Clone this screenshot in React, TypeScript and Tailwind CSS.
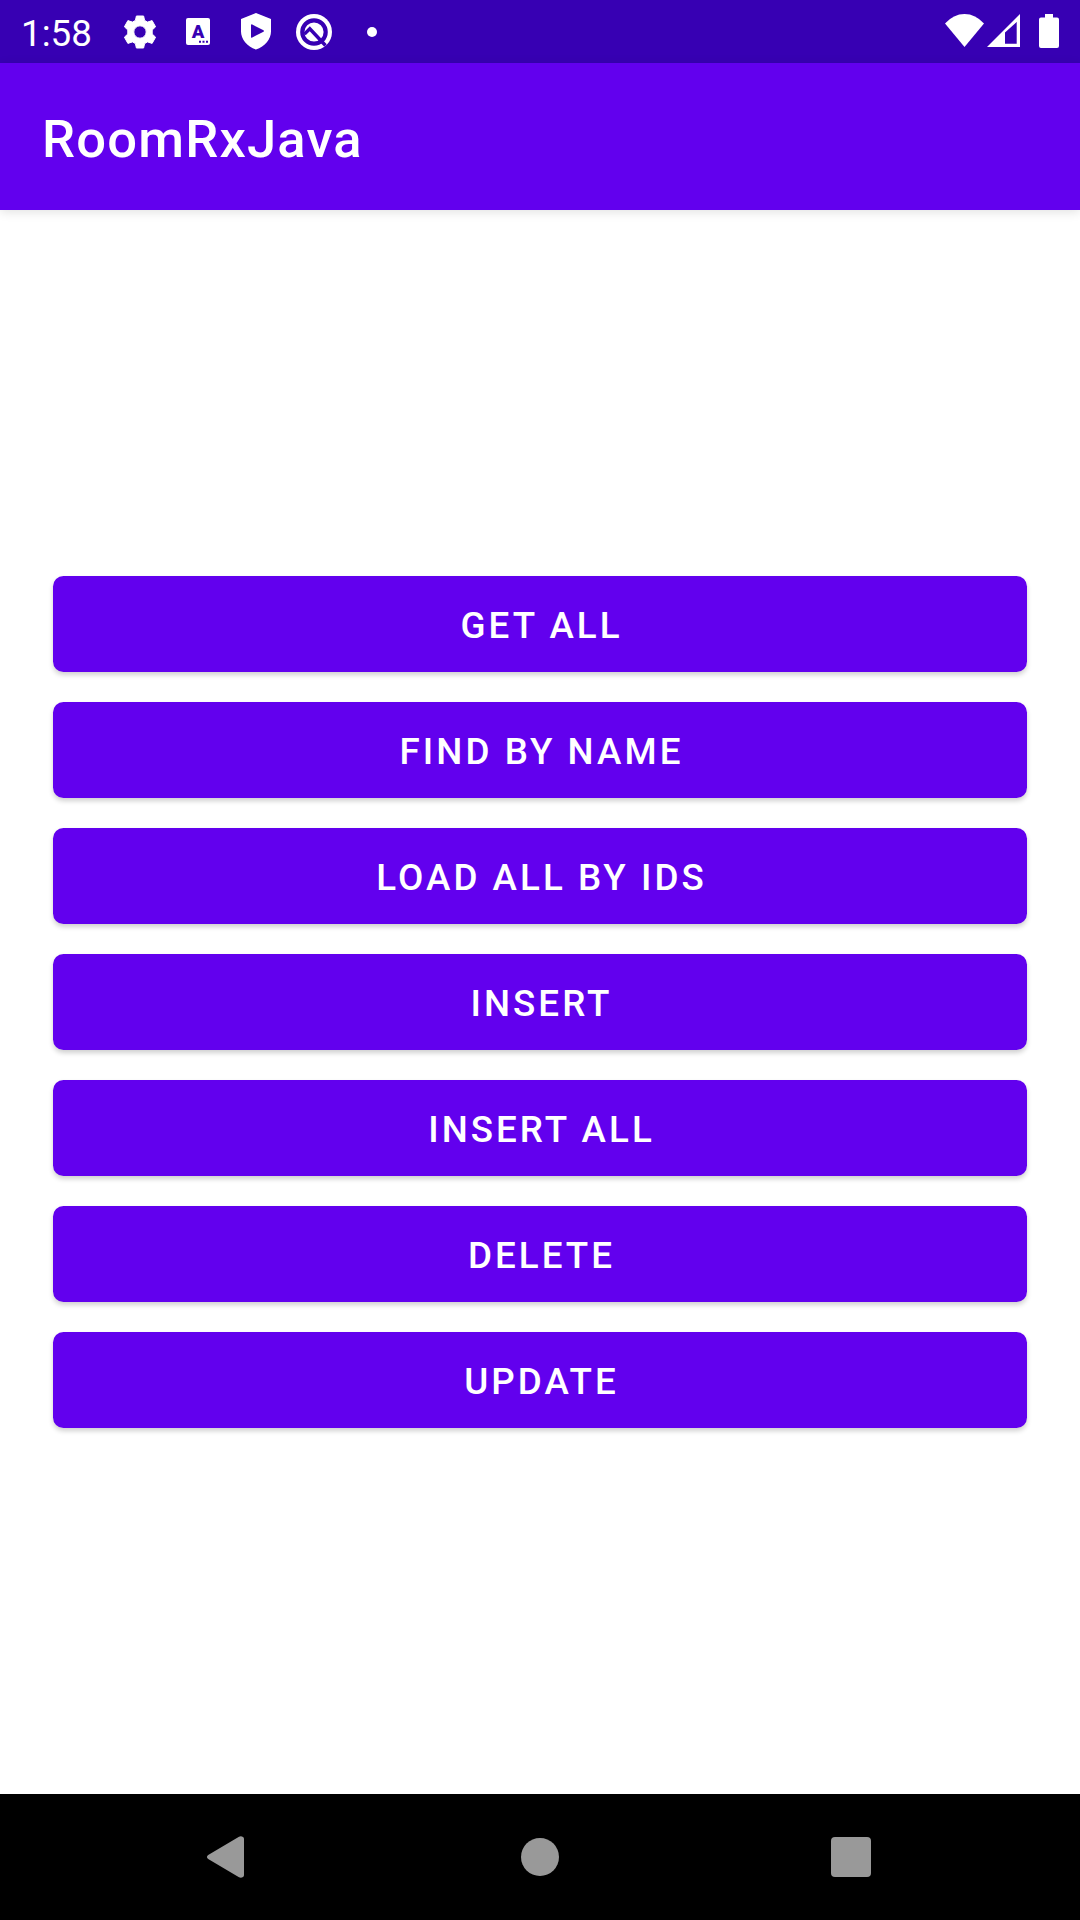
import React from "react";

const actions = [
  "GET ALL",
  "FIND BY NAME",
  "LOAD ALL BY IDS",
  "INSERT",
  "INSERT ALL",
  "DELETE",
  "UPDATE",
];

function GearIcon() {
  return (
    <svg width="34" height="34" viewBox="-17 -17 34 34">
      <path
        fill="#fff"
        stroke="#fff"
        strokeWidth="1"
        strokeLinejoin="round"
        fillRule="evenodd"
        d="M-3.600-16H3.600L4.600-11.600 7.500-9.900 12.100-11.400 15.600-5.200 12.200-2V2L15.600 5.200 12.100 11.400 7.500 9.900 4.600 11.600 3.600 16H-3.600L-4.600 11.600-7.500 9.900-12.100 11.400-15.600 5.200-12.200 2V-2L-15.600-5.200-12.100-11.400-7.500-9.900-4.600-11.600ZM6.200 0A6.200 6.200 0 1 0-6.200 0 6.200 6.200 0 1 0 6.200 0Z"
      />
    </svg>
  );
}

function LetterIcon() {
  return (
    <svg width="24" height="27" viewBox="0 0 24 27">
      <rect width="24" height="27" rx="2" fill="#fff" />
      <text
        x="12"
        y="19.5"
        textAnchor="middle"
        fontFamily="Roboto, sans-serif"
        fontWeight="900"
        fontSize="18.5"
        fill="#3700b3"
      >
        A
      </text>
      <path d="M13 22.7h2v2h-2zM16.5 22.7h2v2h-2zM20 22.7h2v2h-2z" fill="#3700b3" />
    </svg>
  );
}

function ShieldIcon() {
  return (
    <svg width="30" height="37" viewBox="0 0 30 37">
      <path
        fill="#fff"
        fillRule="evenodd"
        d="M15 0 30 6V18.5C30 26 24 33.500 15 36.500 6 33.500 0 26 0 18.500V6ZM10.800 11.300Q10 11.300 10 12.200V24Q10 25 10.800 24.700L22.500 18.800Q23.300 18 22.500 17.300Z"
      />
    </svg>
  );
}

function QIcon() {
  return (
    <svg width="36" height="36" viewBox="0 0 36 36">
      <circle cx="18" cy="18" r="18" fill="#fff" />
      <circle cx="18" cy="18" r="11.7" fill="none" stroke="#3700b3" strokeWidth="4.200" />
      <path d="M8.500 20 13.800 14.800 29.500 31.500" fill="none" stroke="#3700b3" strokeWidth="3.4" />
    </svg>
  );
}

function StatusBar() {
  return (
    <header className="flex h-[63px] items-center justify-between bg-[#3700b3] pr-[21px] pl-[21px] text-white">
      <div className="flex h-full items-center">
        <span className="w-[99px] pt-[5px] text-[36.75px] leading-none">1:58</span>
        <div className="flex">
          <span className="flex w-10 items-center justify-center">
            <GearIcon />
          </span>
          <span className="ml-[18px] flex w-10 items-center justify-center">
            <LetterIcon />
          </span>
          <span className="ml-[18px] flex w-10 items-center justify-center">
            <ShieldIcon />
          </span>
          <span className="ml-[18px] flex w-10 items-center justify-center">
            <QIcon />
          </span>
          <span className="ml-[18px] flex w-10 items-center justify-center">
            <span className="size-[10px] rounded-full bg-white" />
          </span>
        </div>
      </div>
      <div className="flex h-full items-start pt-[14px]">
        <svg width="39" height="33" viewBox="0 0 39 33">
          <path d="M0 9.500Q8.500 0 19.500 0T39 9.500L19.500 33Z" fill="#fff" />
        </svg>
        <svg className="ml-[3px]" width="33" height="33" viewBox="0 0 33 33">
          <path fillRule="evenodd" d="M0 33 33 0V33ZM18 18.500V29.700H29.700V8Z" fill="#fff" />
        </svg>
        <svg className="ml-[19px]" width="20" height="34" viewBox="0 0 20 34">
          <path d="M6 0h8v3.500h4q2 0 2 2V32q0 2-2 2H2q-2 0-2-2V5.500q0-2 2-2h4Z" fill="#fff" />
        </svg>
      </div>
    </header>
  );
}

function NavBar() {
  return (
    <nav className="flex h-[126px] items-center justify-between bg-black pr-[209px] pl-[206px]">
      <svg width="39" height="42" viewBox="0 0 39 42">
        <path
          d="M2.200 19 33 .7Q35 -.3 37 1 38 1.700 38 3V39Q38 40.300 37 41 35 42.300 33 41.300L2.200 23Q-.3 21 2.200 19Z"
          fill="#999"
        />
      </svg>
      <span className="ml-[3px] size-[38px] rounded-full bg-[#999]" />
      <span className="size-[40px] rounded-[4px] bg-[#999]" />
    </nav>
  );
}

export default function App() {
  return (
    <div className="flex h-[1920px] w-[1080px] flex-col bg-white font-[Roboto,sans-serif]">
      <StatusBar />
      <div className="flex h-[147px] items-center bg-[#6200ee] pt-[5px] pl-[42px] shadow-[0_2px_10px_rgba(0,0,0,0.12)]">
        <h1 className="text-[52.5px] leading-none font-medium tracking-[1.2px] text-white">RoomRxJava</h1>
      </div>
      <main className="flex flex-1 flex-col justify-center gap-[30px] px-[53px]">
        {actions.map((label) => (
          <button
            key={label}
            className="flex h-[96px] w-full items-center justify-center rounded-[10.5px] bg-[#6200ee] pt-[5px] pl-[3px] text-[36.75px] leading-none font-medium tracking-[3.05px] text-white shadow-[0_3px_5px_rgba(0,0,0,0.19)]"
          >
            {label}
          </button>
        ))}
      </main>
      <NavBar />
    </div>
  );
}
